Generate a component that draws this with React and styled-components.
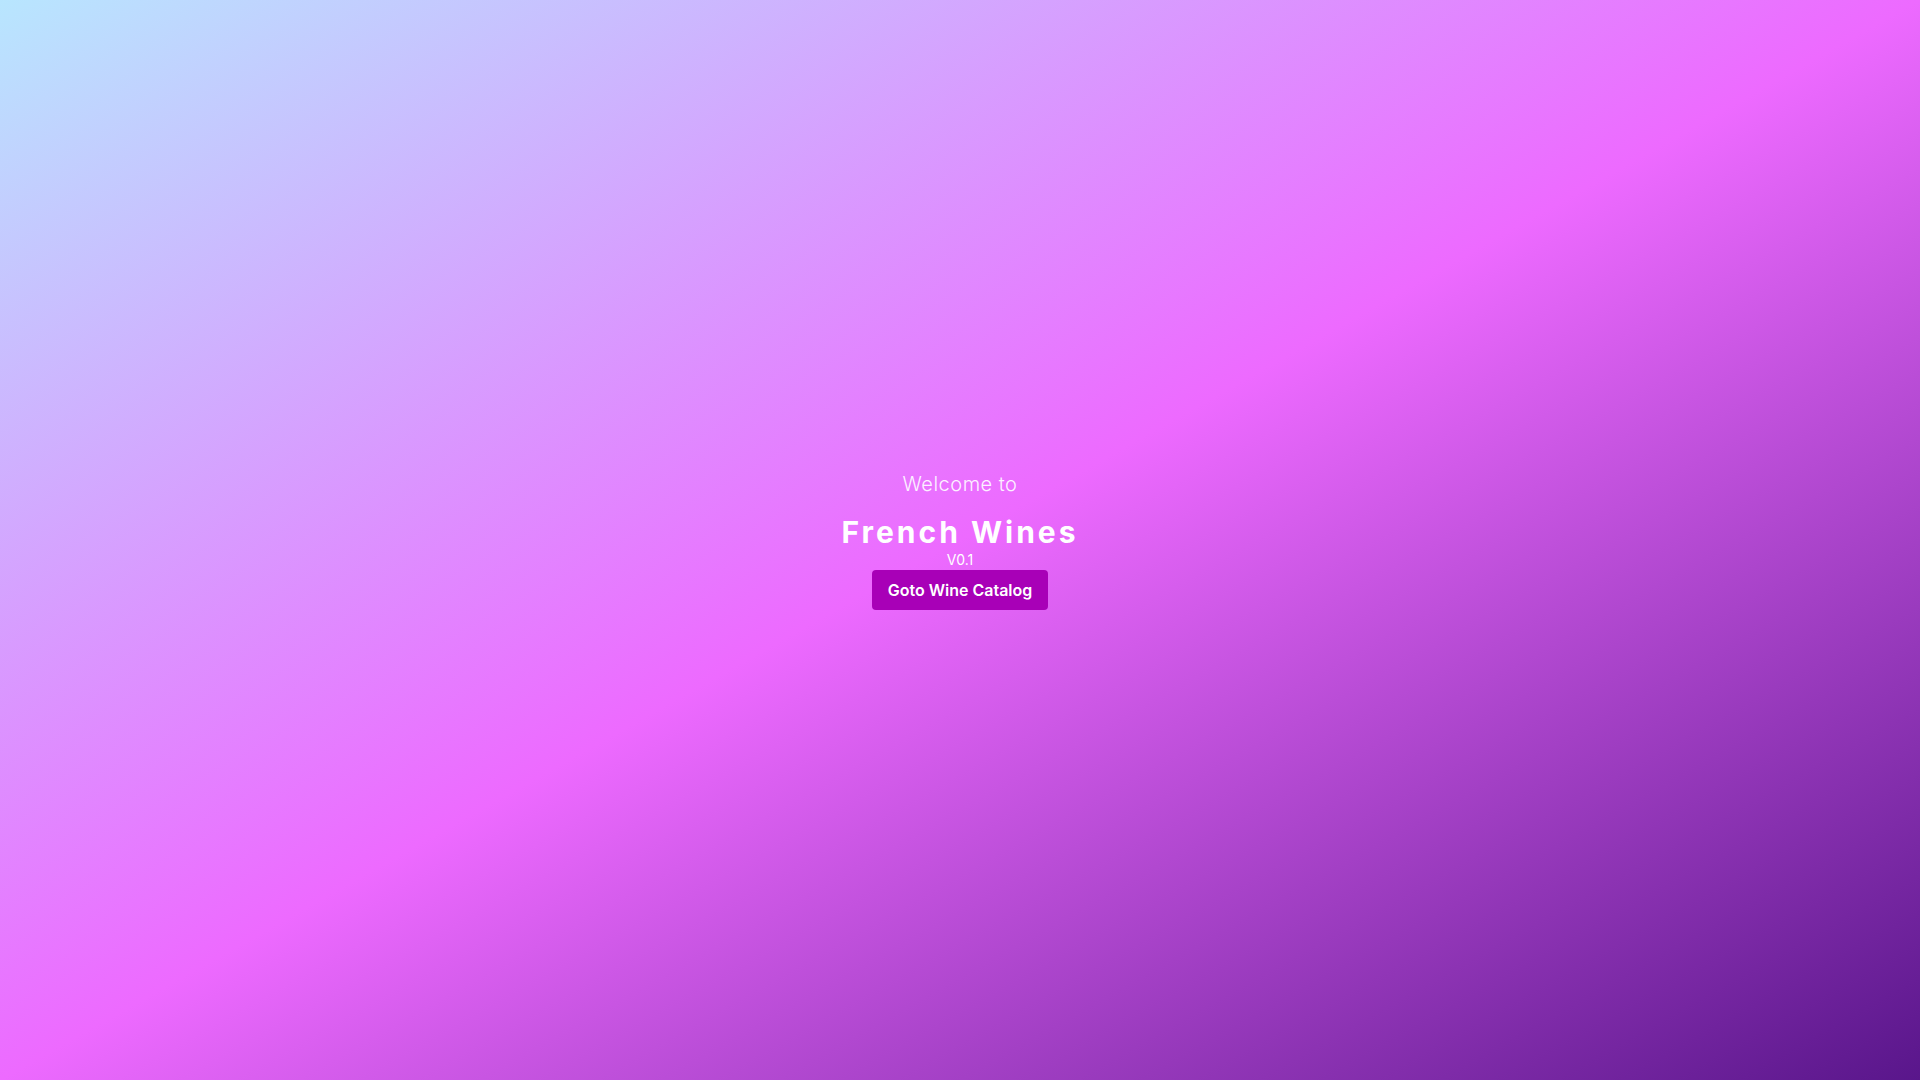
import React from 'react'
import styled, { createGlobalStyle } from 'styled-components'

const Global = createGlobalStyle`
  html, body, #root {
    margin: 0;
    height: 100%;
  }
  body {
    font-family: Inter, "Noto Sans", sans-serif;
  }
`

const Page = styled.main`
  height: 100vh;
  display: flex;
  flex-direction: column;
  align-items: center;
  justify-content: center;
  background: linear-gradient(to bottom right, #b8e6fe, #ed6aff, #59168b);
  color: white;
  text-align: center;
`

const Welcome = styled.p`
  margin: 0 0 16px;
  font-size: 20px;
  font-weight: 300;
  line-height: 28px;
  letter-spacing: 0.025em;
  opacity: 0.9;
`

const Title = styled.h1`
  margin: 0;
  font-size: 30px;
  font-weight: 700;
  line-height: 36px;
  letter-spacing: 0.1em;
`

const Version = styled.span`
  font-size: 14px;
  line-height: 20px;
`

const Button = styled.button`
  padding: 0 16px;
  height: 40px;
  border: none;
  border-radius: 4px;
  background: #a800b7;
  color: white;
  font-family: inherit;
  font-size: 16px;
  font-weight: 600;
  cursor: pointer;
`

export default function App() {
  return (
    <>
      <Global />
      <Page>
        <Welcome>Welcome to</Welcome>
        <Title>French Wines</Title>
        <Version>V0.1</Version>
        <Button>Goto Wine Catalog</Button>
      </Page>
    </>
  )
}
